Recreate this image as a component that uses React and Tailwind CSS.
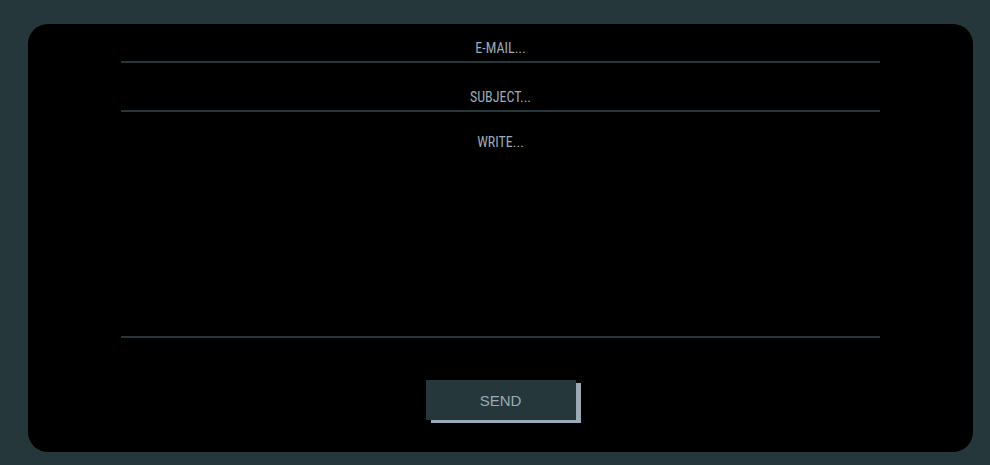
const field =
  "block w-full rounded-none border-b-2 border-[#25373b] bg-transparent text-center font-['Roboto_Condensed','Roboto',sans-serif] text-sm leading-5 text-[#9aabb5] uppercase outline-none placeholder:text-[#9aabb5]";

export default function App() {
  return (
    <main className="flex min-h-screen flex-col bg-[#25373b] pt-6 pr-[17px] pb-[13px] pl-7">
      <form
        className="flex flex-1 flex-col rounded-[20px] bg-black px-[93px] pt-2 pb-8"
        onSubmit={(event) => event.preventDefault()}
      >
        <input type="email" aria-label="E-mail" placeholder="E-MAIL..." className={`${field} h-[31px] pt-[2px]`} />
        <input type="text" aria-label="Subject" placeholder="SUBJECT..." className={`${field} mt-[18px] h-[31px] pt-[2px]`} />
        <textarea aria-label="Message" placeholder="WRITE..." className={`${field} mt-5 h-[206px] resize-none`} />
        <button
          type="submit"
          className="mx-auto mt-[42px] h-10 w-[150px] bg-[#25373b] pt-[2px] font-['Liberation_Sans',Arial,sans-serif] text-[15px] text-[#9aabb5] shadow-[5px_3px_0_#9aabb5]"
        >
          SEND
        </button>
      </form>
    </main>
  );
}
